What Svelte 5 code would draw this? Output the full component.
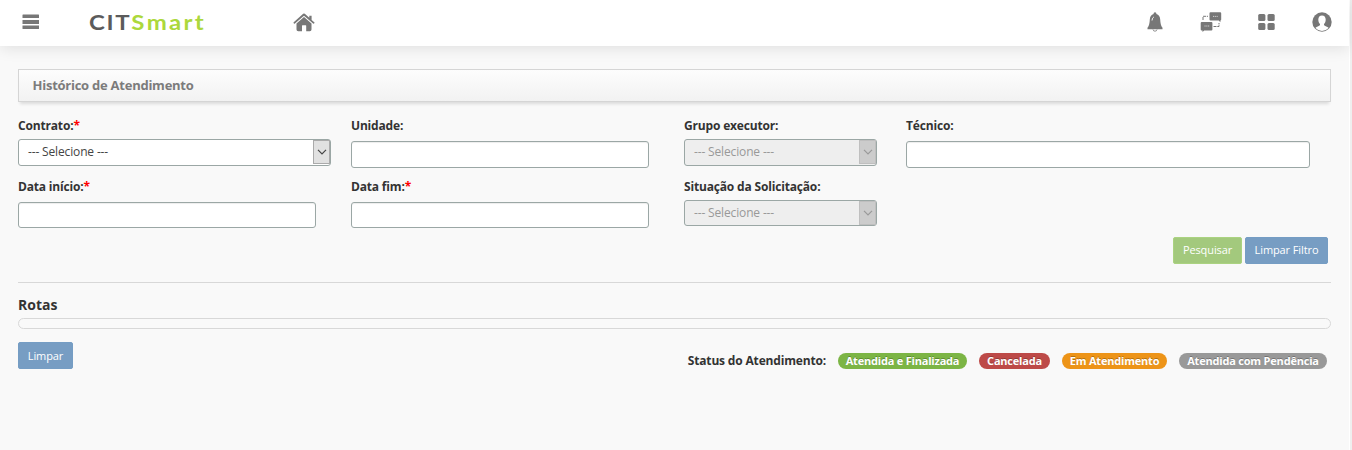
<script>
  const rows = [
    [
      { label: 'Contrato:', required: true, kind: 'select' },
      { label: 'Unidade:', kind: 'input' },
      { label: 'Grupo executor:', kind: 'select', disabled: true },
      { label: 'Técnico:', kind: 'input', wide: true }
    ],
    [
      { label: 'Data início:', required: true, kind: 'input' },
      { label: 'Data fim:', required: true, kind: 'input' },
      { label: 'Situação da Solicitação:', kind: 'select', disabled: true }
    ]
  ];
  const statuses = [
    { text: 'Atendida e Finalizada', tone: 'green' },
    { text: 'Cancelada', tone: 'red' },
    { text: 'Em Atendimento', tone: 'orange' },
    { text: 'Atendida com Pendência', tone: 'gray' }
  ];
</script>

<div class="page">
  <header>
    <svg class="menu" width="18" height="16" viewBox="0 0 18 16"><path d="M1 .5h15.500q.5 0 .5.500v3H.5V1q0-.5.5-.5zM.5 6h16.500v4H.5zM.5 11.500h16.500v3q0 .5-.5.5H1q-.5 0-.5-.5z" /></svg>
    <div class="logo"><span class="dark">CIT</span><span class="lime">Smart</span></div>
    <svg class="home" width="22" height="19" viewBox="0 0 22 19"><path d="M.7 9.200 10.200.8q.8-.6 1.600 0L16.300 4.800V2.700h2.300v4.200l2.700 2.300q.5.600 0 1.100-.6.700-1.200.2L11 2.700 1.900 10.500q-.7.500-1.200-.2-.5-.6 0-1.100z" /><path d="m11 4 7.500 6.500v6q0 1.800-1.700 1.800H13.200v-5.500q0-.5-.5-.5H9.500q-.5 0-.5.500v5.500H5.300q-1.800 0-1.800-1.800v-6z" /></svg>
    <nav>
      <svg width="18" height="20" viewBox="0 0 18 20"><path d="M9 .3c1 0 1.400.7 1.400 1.800 2.400.8 3.700 2.700 3.800 5.400.2 3.700.7 6.300 2.300 8.300v1.500H1.500v-1.500c1.600-2 2.100-4.600 2.300-8.300.1-2.700 1.400-4.600 3.800-5.400C7.600 1 8 .3 9 .3z" /><path d="M7 17.500q.3 1.700 2 1.700t2-1.700" fill="none" stroke="#777" stroke-width=".8" /><path d="M6 8.500q.1-2.700 1.900-3.600" fill="none" stroke="#fff" stroke-width=".9" /></svg>
      <svg width="22" height="20" viewBox="0 0 22 20"><path d="M10.500.2h9.700q1 0 1 1v6.400q0 .9-.8.900v1.800l-1.700-1.800h-8.200q-1 0-1-1V1.200q0-1 1-1zM1.700 10h9.700q1 0 1 1v6.400q0 1-1 1H4.200l-1.700 1.500v-1.500h-.8q-1 0-1-1V11q0-1 1-1z" /><path d="M3 8V4.300h5M13.500 14.500H19V11" fill="none" stroke="#777" stroke-width="1" stroke-dasharray="3 .8" /><path d="M13 4.400h5M4.500 14h5" stroke="#ddd" stroke-width=".9" stroke-dasharray="1.100 .7" /></svg>
      <svg width="18" height="18" viewBox="0 0 18 18"><rect x=".2" y=".9" width="7.200" height="7.200" rx="1.500" /><rect x="9.500" y=".9" width="7.200" height="7.200" rx="1.500" /><rect x=".2" y="9.900" width="7.200" height="7.200" rx="1.500" /><rect x="9.500" y="9.900" width="7.200" height="7.200" rx="1.500" /></svg>
      <svg width="20" height="20" viewBox="0 0 20 20"><circle cx="10" cy="10" r="9.700" /><path d="M10 3.400c2.300 0 3.700 1.600 3.700 4.100 0 2-.7 3.600-1.700 4.500v1c.3.900 1.900 1.200 3.400 1.900q.9.500 1.200 1.200A8.900 8.900 0 0 1 3.400 16.100q.3-.7 1.200-1.200C6.100 14.200 7.700 13.900 8 13v-1c-1-.9-1.700-2.500-1.700-4.500 0-2.500 1.400-4.100 3.700-4.100z" fill="#fff" /></svg>
    </nav>
  </header>

  <main>
    <h1>Histórico de Atendimento</h1>
    {#each rows as row}
      <div class="row">
        {#each row as f}
          <div class="field">
            <span class="label">{f.label}{#if f.required}<b>*</b>{/if}</span>
            {#if f.kind === 'select'}
              <div class="select" class:disabled={f.disabled}>
                <span class="value">--- Selecione ---</span>
                <span class="arrow"><svg width="10" height="6" viewBox="0 0 10 6"><path d="m1 .8 4 4 4-4" fill="none" stroke="currentColor" stroke-width="1.200" /></svg></span>
              </div>
            {:else}
              <input class:wide={f.wide} type="text" aria-label={f.label} />
            {/if}
          </div>
        {/each}
      </div>
    {/each}
    <div class="actions">
      <button class="go">Pesquisar</button>
      <button>Limpar Filtro</button>
    </div>
    <h2>Rotas</h2>
    <div class="routes"></div>
    <footer>
      <button>Limpar</button>
      <div class="legend">
        <span class="caption">Status do Atendimento:</span>
        {#each statuses as s}<span class="badge {s.tone}">{s.text}</span>{/each}
      </div>
    </footer>
  </main>
</div>

<style>
  :global(body) { background: #efefef; overflow: hidden; }
  .page { box-sizing: border-box; width: 1350px; height: 450px; background: #f9f9f9; border-right: 1px solid #fff; font: 12px/18px "Open Sans", sans-serif; color: #333; }
  header { display: flex; align-items: flex-start; box-sizing: border-box; height: 46px; padding-left: 22px; background: #fff; box-shadow: 0 2px 16px rgba(0, 0, 0, .11); }
  svg { display: block; fill: #777; flex: none; }
  .menu { margin-top: 14px; }
  .logo { width: 204px; margin: 8px 0 0 49px; font: 700 21.500px/28px Lato, sans-serif; letter-spacing: 1.500px; white-space: nowrap; transform: scaleX(1.115); transform-origin: left; }
  .dark { color: #5b5b5b; }
  .lime { color: #acd83c; letter-spacing: 2.100px; }
  .home { margin-top: 13px; }
  nav { display: flex; align-items: center; justify-content: space-between; width: 186.500px; height: 20px; margin: 12px 0 0 831px; }
  main { width: 1313px; padding: 23px 0 0 18px; }
  h1 { box-sizing: border-box; height: 33px; margin: 0 0 15px; padding-left: 13.500px; border: 1px solid #d5d5d5; background: linear-gradient(#fdfdfd, #f2f2f2); box-shadow: 0 4px 3px -2px rgba(0, 0, 0, .12); font-size: 13px; line-height: 31px; font-weight: 700; letter-spacing: -.25px; color: #7c7c7c; }
  .row { display: grid; grid-template-columns: 333px 333px 222px 1fr; height: 61px; }
  .field { display: flex; flex-direction: column; align-items: flex-start; }
  .label { height: 22px; font-weight: 700; line-height: 18px; letter-spacing: -.170px; white-space: nowrap; }
  .label b { font-weight: 700; color: #f00; }
  input { box-sizing: border-box; width: 298px; height: 27px; margin: 2px 0 0; padding: 0 8px; border: 1px solid #9ba7a5; border-radius: 3px; background: #fff; box-shadow: inset 0 1px 1px rgba(0, 0, 0, .075); }
  input.wide { width: 404px; }
  .row + .row input { height: 26px; }
  .select { display: flex; justify-content: space-between; box-sizing: border-box; width: 313px; height: 27px; border: 1px solid #9ba7a5; border-radius: 3px; background: #fff; color: #444; }
  .value { padding-left: 9px; line-height: 24px; letter-spacing: -.15px; }
  .arrow { display: flex; align-items: center; justify-content: center; box-sizing: border-box; width: 17px; height: 24px; border: 1px solid #aaa; background: #e1e1e1; color: #444; }
  .disabled { width: 193px; background: #eee; color: #999; }
  .disabled .arrow { border-color: #bfbfbf; background: #ccc; color: #999; }
  .row + .row .select { height: 26px; }
  .actions { display: flex; justify-content: flex-end; gap: 3px; height: 45px; margin-top: -2px; padding-right: 3px; border-bottom: 1px solid #d8d8d8; }
  button { box-sizing: border-box; height: 27px; padding: 0; width: 55px; border: 1px solid #759dc4; border-radius: 2px; background: #779dc3; color: #fff; font: 11px/24px "Open Sans", sans-serif; letter-spacing: -.1px; white-space: nowrap; }
  .actions button { width: 83px; padding-bottom: 1px; }
  .actions .go { width: 69px; border-color: #abd381; background: #a3c97d; }
  h2 { height: 18px; margin: 13px 0 4px; font-size: 14px; line-height: 18px; font-weight: 700; }
  .routes { box-sizing: border-box; height: 11px; border: 1px solid #d8d8d8; border-radius: 6px; }
  footer { display: flex; justify-content: space-between; margin-top: 13px; }
  .legend { display: flex; align-items: center; gap: 12px; height: 16px; padding: 11px 4px 0 0; }
  .caption { font-weight: 700; letter-spacing: -.170px; }
  .badge { box-sizing: border-box; height: 16px; border-radius: 8px; font-size: 11px; line-height: 16px; font-weight: 700; letter-spacing: -.2px; color: #fff; text-align: center; white-space: nowrap; text-shadow: 0 -1px 0 rgba(0, 0, 0, .25); }
  .green { width: 129px; background: #7cb545; }
  .red { width: 71px; background: #bd4a48; }
  .orange { width: 105px; background: #ed9418; }
  .gray { width: 148px; background: #999; }
</style>
